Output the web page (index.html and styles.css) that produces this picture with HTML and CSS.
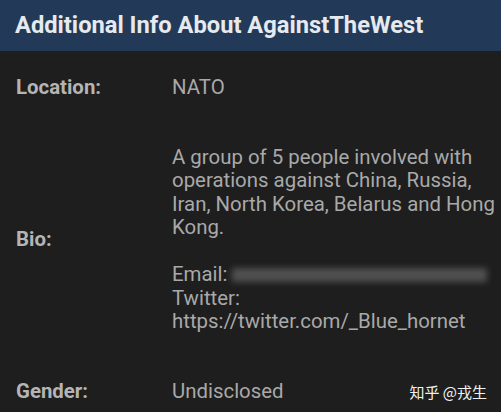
FILE: index.html
```html
<!DOCTYPE html>
<html lang="en">
<head>
  <meta charset="UTF-8">
  <title>Additional Info</title>
  <link rel="stylesheet" href="styles.css">
</head>
<body>
  <div class="panel">
    <div class="panel-head">Additional Info About AgainstTheWest</div>
    <div class="info">
      <div class="label">Location:</div>
      <div class="value">NATO</div>

      <div class="label">Bio:</div>
      <div class="value">
        A group of 5 people involved with operations against China, Russia, Iran, North Korea, Belarus and Hong Kong.<br><br>
        Email: <span class="blur"></span><br>
        Twitter:<br>
        https://twitter.com/_Blue_hornet
      </div>

      <div class="label">Gender:</div>
      <div class="value">Undisclosed</div>
    </div>
  </div>
  <div class="watermark">知乎 @戎生</div>
</body>
</html>
```

FILE: styles.css
```css
body {
  margin: 0;
  background-color: #1e1e1e;
  font-family: Roboto, "Liberation Sans", sans-serif;
  height: 412px;
  overflow: hidden;
  position: relative;
}

.panel-head {
  background-color: #223a58;
  color: #e6eaee;
  font-weight: bold;
  font-size: 23.7px;
  height: 51px;
  line-height: 50px;
  padding-left: 15px;
}

.info {
  display: grid;
  grid-template-columns: 156px 1fr;
  row-gap: 46px;
  padding: 25px 0 0 16px;
  font-size: 20.4px;
  line-height: 23.5px;
}

.label {
  align-self: center;
  font-weight: bold;
  color: #b5b5b5;
}

.value {
  color: #a9a9a9;
  padding-right: 2px;
}

.blur {
  display: inline-block;
  width: 255px;
  height: 14px;
  vertical-align: -1px;
  background-color: #505050;
  filter: blur(3px);
}

.watermark {
  position: absolute;
  right: 14px;
  bottom: 10px;
  color: #f2f2f2;
  font-family: "Noto Sans CJK SC", sans-serif;
  font-size: 15px;
}
```
